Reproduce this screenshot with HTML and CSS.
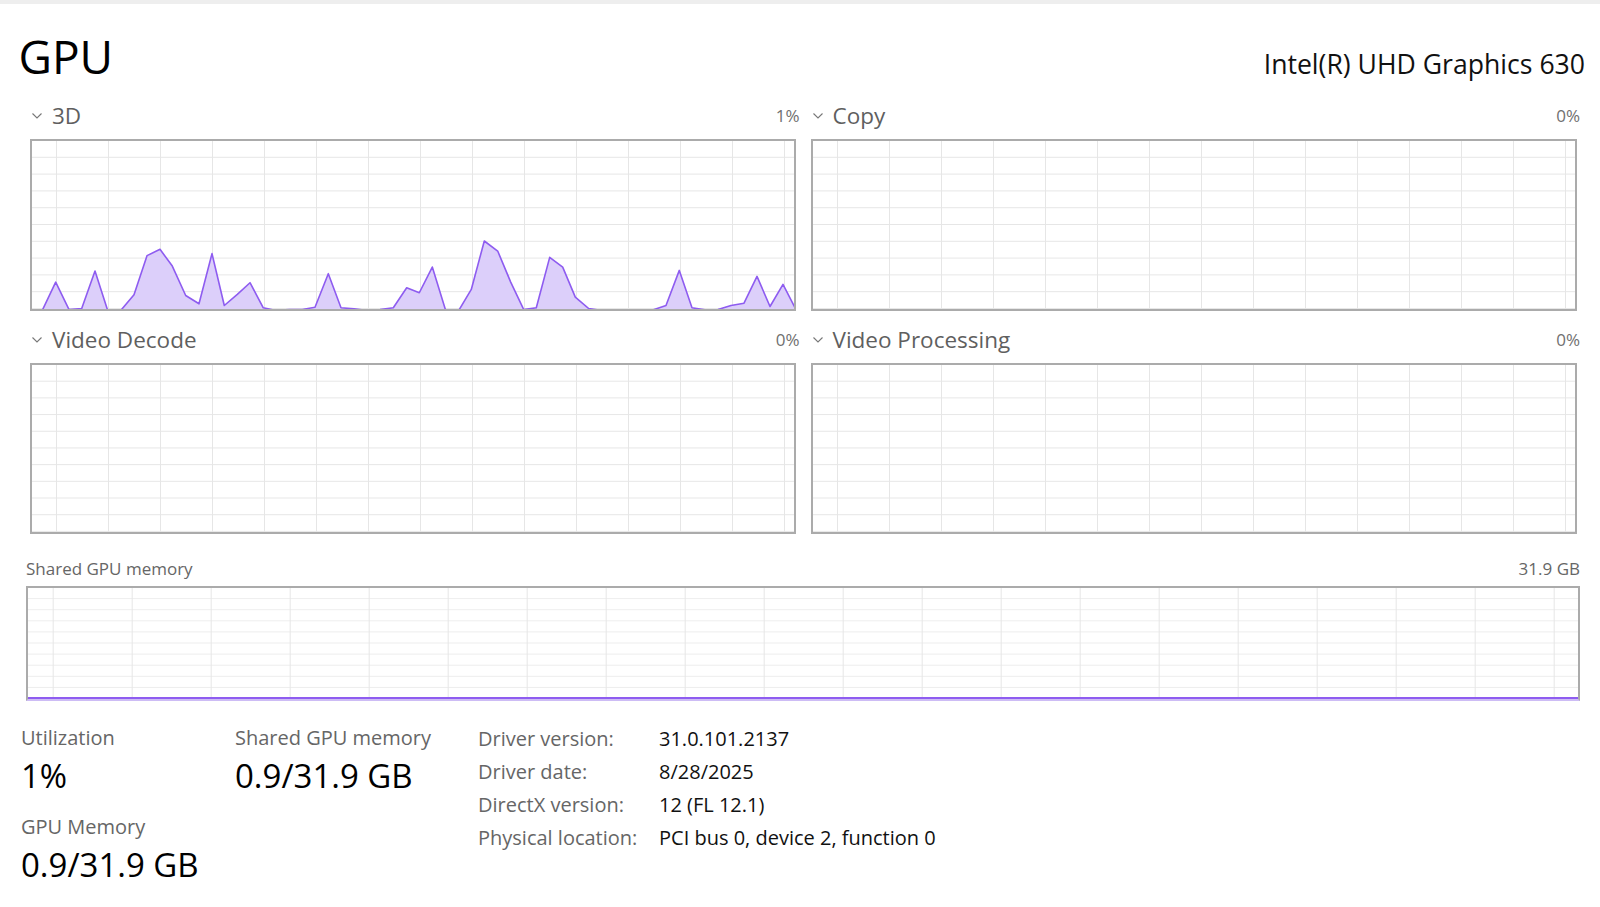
FILE: index.html
```html
<!DOCTYPE html>
<html lang="en">
<head>
<meta charset="utf-8">
<title>GPU</title>
<link rel="stylesheet" href="styles.css">
</head>
<body>
<div class="strip"></div>
<main class="page">
  <header class="head">
    <h1 class="title">GPU</h1>
    <div class="device">Intel(R) UHD Graphics 630</div>
  </header>

  <section class="engines">
    <div class="panel">
      <div class="panel-head">
        <svg class="chev" width="10" height="6" viewBox="0 0 10 6"><path d="M0.5 0.5 L5 5 L9.5 0.5" fill="none" stroke="#777" stroke-width="1.1"/></svg>
        <span class="pname">3D</span>
        <span class="pct">1%</span>
      </div>
      <div class="chart">
        <svg class="plot" viewBox="2 2 762 167" preserveAspectRatio="none">
          <polygon class="area" points="0,171 12.7,170 25.7,142.7 39,170 51.7,169 65,131.7 77.7,171 90.7,171 104,155.3 117,116.3 130,110 142.3,126.7 155.7,156 169,164.3 182,114.3 194.3,166 207.3,155 220,143.3 233.3,168.3 246,171 259.3,170 272.3,170 285,167.7 298.3,134.3 311,168.3 324,169.3 337.3,171 350,170 363.3,168.3 376.7,148.3 389.3,153.3 402.3,127.7 415.7,171 428.7,171 441.3,150 454.3,101.7 467.7,111.7 480.7,142.7 493.7,170 506.3,168.3 519.7,118 532.7,127.7 545.3,157.7 558.7,169 571.7,171 584.7,170.3 597.3,170.3 610.3,171 623.3,170.3 636,166 649.3,131 662,168.3 675,170.3 688,170 701,166 714,163.7 727,137 740,167 753,145 766,170 766,171"/>
          <polyline class="line" points="0,171 12.7,170 25.7,142.7 39,170 51.7,169 65,131.7 77.7,171 90.7,171 104,155.3 117,116.3 130,110 142.3,126.7 155.7,156 169,164.3 182,114.3 194.3,166 207.3,155 220,143.3 233.3,168.3 246,171 259.3,170 272.3,170 285,167.7 298.3,134.3 311,168.3 324,169.3 337.3,171 350,170 363.3,168.3 376.7,148.3 389.3,153.3 402.3,127.7 415.7,171 428.7,171 441.3,150 454.3,101.7 467.7,111.7 480.7,142.7 493.7,170 506.3,168.3 519.7,118 532.7,127.7 545.3,157.7 558.7,169 571.7,171 584.7,170.3 597.3,170.3 610.3,171 623.3,170.3 636,166 649.3,131 662,168.3 675,170.3 688,170 701,166 714,163.7 727,137 740,167 753,145 766,170"/>
        </svg>
      </div>
    </div>

    <div class="panel">
      <div class="panel-head">
        <svg class="chev" width="10" height="6" viewBox="0 0 10 6"><path d="M0.5 0.5 L5 5 L9.5 0.5" fill="none" stroke="#777" stroke-width="1.1"/></svg>
        <span class="pname">Copy</span>
        <span class="pct">0%</span>
      </div>
      <div class="chart"></div>
    </div>

    <div class="panel">
      <div class="panel-head">
        <svg class="chev" width="10" height="6" viewBox="0 0 10 6"><path d="M0.5 0.5 L5 5 L9.5 0.5" fill="none" stroke="#777" stroke-width="1.1"/></svg>
        <span class="pname">Video Decode</span>
        <span class="pct">0%</span>
      </div>
      <div class="chart"></div>
    </div>

    <div class="panel">
      <div class="panel-head">
        <svg class="chev" width="10" height="6" viewBox="0 0 10 6"><path d="M0.5 0.5 L5 5 L9.5 0.5" fill="none" stroke="#777" stroke-width="1.1"/></svg>
        <span class="pname">Video Processing</span>
        <span class="pct">0%</span>
      </div>
      <div class="chart"></div>
    </div>
  </section>

  <section class="memory">
    <div class="mem-head">
      <span class="mem-label">Shared GPU memory</span>
      <span class="mem-max">31.9 GB</span>
    </div>
    <div class="mem-chart"><div class="mem-fill"></div></div>
  </section>

  <section class="stats">
    <div class="col c1">
      <div class="stat">
        <div class="slabel">Utilization</div>
        <div class="sval">1%</div>
      </div>
      <div class="stat gap">
        <div class="slabel">GPU Memory</div>
        <div class="sval">0.9/31.9 GB</div>
      </div>
    </div>
    <div class="col c2">
      <div class="stat">
        <div class="slabel">Shared GPU memory</div>
        <div class="sval">0.9/31.9 GB</div>
      </div>
    </div>
    <dl class="details">
      <dt>Driver version:</dt><dd>31.0.101.2137</dd>
      <dt>Driver date:</dt><dd>8/28/2025</dd>
      <dt>DirectX version:</dt><dd>12 (FL 12.1)</dd>
      <dt>Physical location:</dt><dd>PCI bus 0, device 2, function 0</dd>
    </dl>
  </section>
</main>
</body>
</html>
```

FILE: styles.css
```css
* { box-sizing: border-box; }
html, body { margin: 0; padding: 0; background: #fff; }
body {
  width: 1600px;
  height: 907px;
  overflow: hidden;
  font-family: "Open Sans", "Noto Sans", sans-serif;
  color: #000;
}
.strip { height: 4px; background: #eeeeee; }

.head {
  display: flex;
  justify-content: space-between;
  align-items: baseline;
  height: 96px;
  padding: 20px 15px 0 18.5px;
}
.title { margin: 0; font-weight: 400; font-size: 46px; line-height: 64px; }
.device { font-size: 26.6px; line-height: 36px; color: #111; }

.engines {
  display: grid;
  grid-template-columns: 1fr 1fr;
  column-gap: 11px;
  row-gap: 13px;
  padding: 0 20px 0 30px;
}
.panel { display: flex; flex-direction: column; }
.panel-head {
  display: flex;
  align-items: flex-start;
  height: 39px;
}
.chev { margin: 13px 0 0 2px; flex: none; }
.pname { margin-left: 10px; padding-top: 1px; font-size: 22.5px; line-height: 29px; color: #5f5f5f; }
.pct { margin-left: auto; padding-top: 4px; font-size: 17px; line-height: 23px; color: #707070; }

.chart {
  width: 766px;
  height: 171.5px;
  border: 2px solid #ababab;
  background-color: #fff;
  background-image:
    linear-gradient(to right, #e6e6e6 1px, transparent 1px),
    linear-gradient(to top, #e6e6e6 1px, transparent 1px);
  background-size: 52px 100%, 100% 10%;
  background-position: 24px 0, 0 0;
}
.plot { display: block; width: 100%; height: 100%; }
.area { fill: #dccffa; stroke: none; }
.line { fill: none; stroke: #8e5cf0; stroke-width: 1.6; stroke-linejoin: round; vector-effect: non-scaling-stroke; }

.memory { margin-top: 22px; padding: 0 20px 0 26px; }
.mem-head {
  display: flex;
  justify-content: space-between;
  height: 30px;
  padding-top: 1px;
  font-size: 17px;
  line-height: 23px;
  color: #666;
}
.mem-chart {
  height: 115px;
  border: 2px solid #ababab;
  border-bottom-color: #cdbcf5;
  display: flex;
  flex-direction: column;
  justify-content: flex-end;
  background-image:
    linear-gradient(to right, #e6e6e6 1px, transparent 1px),
    linear-gradient(to top, #ececec 1px, transparent 1px);
  background-size: 79px 100%, 100% 10%;
  background-position: 24.7px 0, 0 0;
}
.mem-fill { height: 2px; background: #8e5cf0; }

.stats { display: flex; margin-top: 19px; padding-left: 21px; }
.col { padding-top: 3.5px; }
.c1 { width: 214px; }
.c2 { width: 243px; }
.slabel { font-size: 20px; line-height: 27px; color: #666; }
.sval { margin-top: 3px; font-size: 33px; line-height: 44px; color: #000; }
.stat.gap { margin-top: 15px; }
.details {
  margin: 1.5px 0 0;
  display: grid;
  grid-template-columns: 181px auto;
  grid-auto-rows: 33.2px;
  font-size: 20px;
  line-height: 33.2px;
}
.details dt { color: #666; }
.details dd { margin: 0; color: #111; }
```
